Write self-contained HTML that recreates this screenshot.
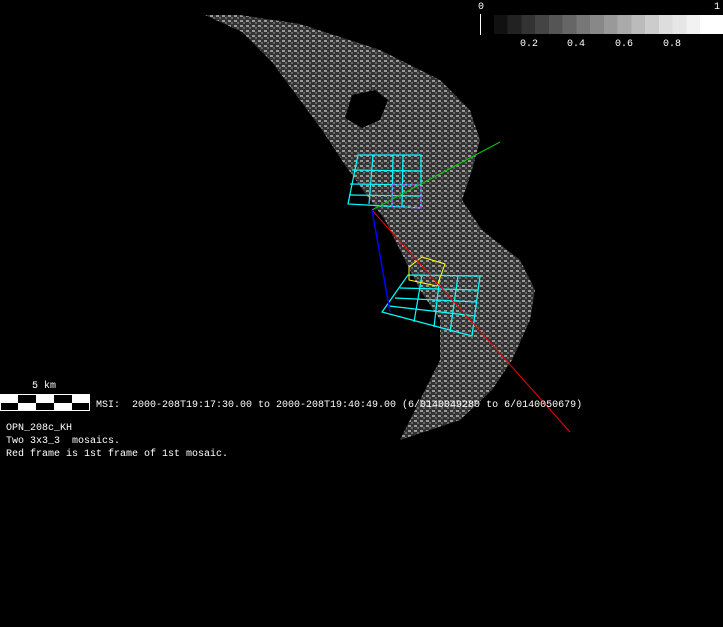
<!DOCTYPE html>
<html><head><style>
body{margin:0;background:#000;width:723px;height:627px;overflow:hidden;position:relative;font-family:"Liberation Mono",monospace;color:#fff;font-size:10px}
.t{position:absolute;white-space:pre;line-height:13px}
</style></head><body>
<svg width="723" height="627" style="position:absolute;left:0;top:0">
<defs>
<pattern id="p" width="6" height="5" patternUnits="userSpaceOnUse">
<rect width="6" height="5" fill="#333"/>
<rect x="0" y="0" width="3" height="2" fill="#999"/>
<rect x="3" y="2" width="2" height="2" fill="#666"/>
</pattern>
</defs>
<polygon fill="url(#p)" points="205,15 240,15 300,24 380,50 440,80 470,110 480,140 472,170 462,200 482,230 520,260 535,290 530,320 512,360 492,390 460,420 400,440 420,400 440,360 440,320 420,290 400,250 385,220 370,200 345,165 322,130 300,100 272,62 242,32"/>
<polygon fill="#000" points="352,95 375,90 388,100 380,120 362,128 345,118"/>
<g fill="none" stroke="#0ff" stroke-width="1.2">
<polygon points="358,155 421,155 421,208 348,204"/>
<line x1="352" y1="170" x2="421" y2="171"/><line x1="350" y1="184" x2="421" y2="185"/><line x1="349" y1="195" x2="421" y2="196"/>
<line x1="373" y1="155" x2="369" y2="204"/><line x1="393" y1="155" x2="392" y2="206"/><line x1="403" y1="155" x2="402" y2="207"/>
<polygon points="408,275 480,276 472,336 382,312"/>
<line x1="400" y1="288" x2="478" y2="290"/><line x1="395" y1="298" x2="477" y2="302"/><line x1="389" y1="306" x2="475" y2="316"/>
<line x1="422" y1="275" x2="414" y2="322"/><line x1="440" y1="275" x2="434" y2="327"/><line x1="458" y1="276" x2="450" y2="332"/>
</g>
<polyline fill="none" stroke="#ff0" points="422,257 445,264 437,286 409,280 409,267 422,257"/>
<polyline fill="none" stroke="#f0f" stroke-dasharray="3,2" points="392,185 421,185 421,208 392,207 392,185"/>
<line x1="372" y1="210" x2="500" y2="142" stroke="#0c0"/>
<line x1="372" y1="210" x2="570" y2="432" stroke="#e00"/>
<line x1="372" y1="210" x2="390" y2="312" stroke="#00f" stroke-width="1.5"/>
<line x1="480.5" y1="14" x2="480.5" y2="35" stroke="#fff"/>
<rect x="0.5" y="394.5" width="89" height="16" fill="#fff" stroke="#fff"/>
<rect x="18" y="395" width="18" height="8" fill="#000"/><rect x="54" y="395" width="18" height="8" fill="#000"/>
<rect x="0" y="403" width="18" height="8" fill="#000"/><rect x="36" y="403" width="18" height="8" fill="#000"/><rect x="72" y="403" width="18" height="8" fill="#000"/>
<rect x="0.5" y="394.5" width="89" height="16" fill="none" stroke="#fff"/>
</svg>
<div style="position:absolute;left:494px;top:15px;width:229px;height:19px;background:linear-gradient(90deg,#111 0%,#111 6%,#222 6%,#222 12%,#333 12%,#333 18%,#444 18%,#444 24%,#555 24%,#555 30%,#666 30%,#666 36%,#777 36%,#777 42%,#888 42%,#888 48%,#999 48%,#999 54%,#aaa 54%,#aaa 60%,#bbb 60%,#bbb 66%,#ccc 66%,#ccc 72%,#ddd 72%,#ddd 78%,#e6e6e6 78%,#e6e6e6 84%,#f2f2f2 84%,#f2f2f2 90%,#fff 90%)"></div>
<div class="t" style="left:478px;top:1px">0</div>
<div class="t" style="left:714px;top:1px">1</div>
<div class="t" style="left:520px;top:38px">0.2</div>
<div class="t" style="left:567px;top:38px">0.4</div>
<div class="t" style="left:615px;top:38px">0.6</div>
<div class="t" style="left:663px;top:38px">0.8</div>
<div class="t" style="left:32px;top:380px">5 km</div>
<div class="t" style="left:96px;top:399px">MSI:  2000-208T19:17:30.00 to 2000-208T19:40:49.00 (6/0140049280 to 6/0140050679)</div>
<div class="t" style="left:6px;top:422px">OPN_208c_KH
Two 3x3_3  mosaics.
Red frame is 1st frame of 1st mosaic.</div>
</body></html>
